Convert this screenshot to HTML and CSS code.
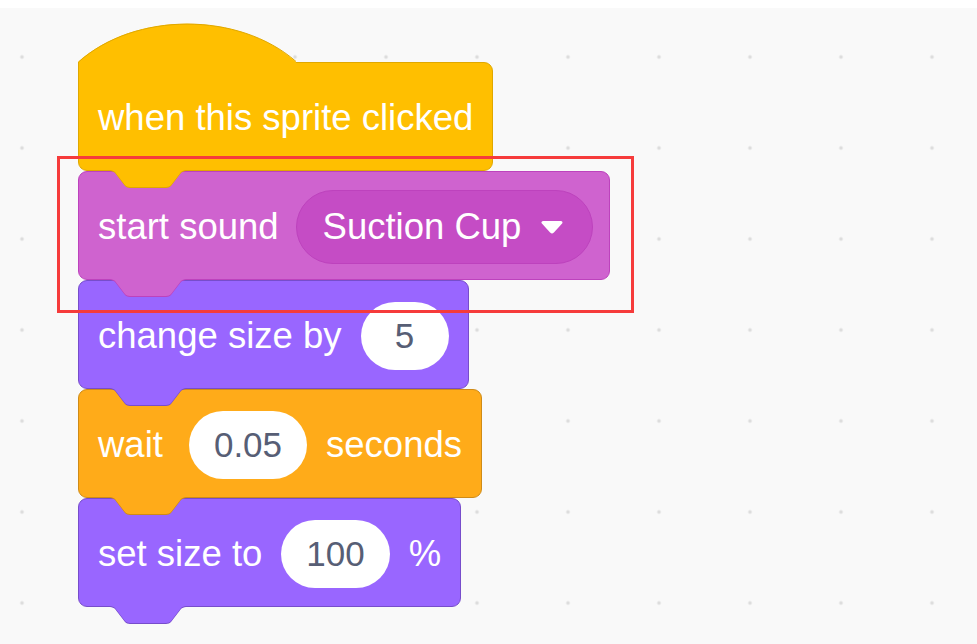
FILE: index.html
```html
<!DOCTYPE html>
<html lang="en">

<head>
    <meta charset="UTF-8">
    <meta name="viewport" content="width=device-width, initial-scale=1.0">
    <title>Scratch script</title>
    <link rel="stylesheet" href="styles.css">
</head>

<body>
    <div class="workspace">
        <div class="script">
            <div class="hat">
                <svg class="hat-cap" width="220" height="43" viewBox="0 0 220 43">
                    <path d="M0 43 L0 41 C57 -10 161 -10 218 41 L218 43 Z" fill="#ffbf00" />
                    <path d="M0.5 43 L0.5 41 C57 -9.5 161 -9.5 218 40.5" fill="none" stroke="#e0a800" stroke-width="1" />
                </svg>
                <div class="block events">
                    <span>when this sprite clicked</span>
                </div>
            </div>

            <div class="block sound">
                <span>start sound</span>
                <span class="dropdown">
                    <span>Suction Cup</span>
                    <svg class="arrow" width="24" height="14" viewBox="0 0 24 14">
                        <path d="M3 2.5 H21 L12.8 11.5 Q12 12.3 11.2 11.5 Z" fill="#fff" stroke="#fff" stroke-width="3" stroke-linejoin="round" />
                    </svg>
                </span>
            </div>

            <div class="block looks">
                <span>change size by</span>
                <span class="num">5</span>
            </div>

            <div class="block control">
                <span>wait</span>
                <span class="num">0.05</span>
                <span>seconds</span>
            </div>

            <div class="block looks">
                <span>set size to</span>
                <span class="num">100</span>
                <span>%</span>
            </div>
        </div>

        <div class="highlight"></div>
    </div>
</body>

</html>
```

FILE: styles.css
```css
body {
    margin: 0;
    background: #fff;
    font-family: "Liberation Sans", Arial, sans-serif;
}

.workspace {
    position: relative;
    margin-top: 8px;
    height: 636px;
    overflow: hidden;
    background-color: #f9f9f9;
    background-image: radial-gradient(circle, #dcdcdc 0 1.3px, transparent 2.3px);
    background-size: 91px 91px;
    background-position: -23.5px 3.5px;
}

.script {
    display: flex;
    flex-direction: column;
    align-items: flex-start;
    padding: 13px 0 0 78px;
}

.hat {
    display: flex;
    flex-direction: column;
    align-items: flex-start;
}

.hat-cap {
    display: block;
    position: relative;
    z-index: 2;
    margin-bottom: -2px;
}

.block {
    --fill: #9966ff;
    --edge: #774dcb;
    position: relative;
    display: flex;
    align-items: center;
    gap: 19px;
    box-sizing: border-box;
    height: 109px;
    padding: 3px 19px 0 19px;
    background: var(--fill);
    border: 1px solid var(--edge);
    border-radius: 9px;
    color: #fff;
    font-size: 36.5px;
    white-space: nowrap;
}

/* notch that sticks out under each block */
.block::before,
.block::after {
    content: "";
    position: absolute;
    left: 31px;
    width: 76px;
    height: 17px;
    z-index: 1;
    clip-path: path('M0 0 C2 0 4 1 5 2 L15 15 C16 16 18 17 20 17 L56 17 C58 17 60 16 61 15 L71 2 C72 1 74 0 76 0 Z');
}

.block::before {
    top: calc(100% + 1px);
    background: var(--edge);
}

.block::after {
    top: 100%;
    background: var(--fill);
}

.hat .block {
    border-top-left-radius: 0;
}

.events {
    --fill: #ffbf00;
    --edge: #e0a800;
}

.sound {
    --fill: #cf63cf;
    --edge: #bd42bd;
    gap: 17px;
    padding-right: 16px;
}

.looks {
    --fill: #9966ff;
    --edge: #774dcb;
}

.control {
    --fill: #ffab19;
    --edge: #cf8b17;
}

.control .num {
    margin-left: 7px;
}

.num {
    display: flex;
    align-items: center;
    justify-content: center;
    box-sizing: border-box;
    min-width: 88px;
    height: 68px;
    padding: 0 25px;
    background: #fff;
    border-radius: 34px;
    color: #575e75;
    font-size: 35px;
}

.dropdown {
    display: flex;
    align-items: center;
    gap: 19px;
    box-sizing: border-box;
    height: 74px;
    padding: 0 28px 0 26px;
    background: #c54cc5;
    border: 1px solid #bd42bd;
    border-radius: 37px;
}

.arrow {
    display: block;
}

.highlight {
    position: absolute;
    left: 57px;
    top: 148px;
    width: 577px;
    height: 157px;
    box-sizing: border-box;
    border: 3px solid #f63b3b;
    pointer-events: none;
}
```
